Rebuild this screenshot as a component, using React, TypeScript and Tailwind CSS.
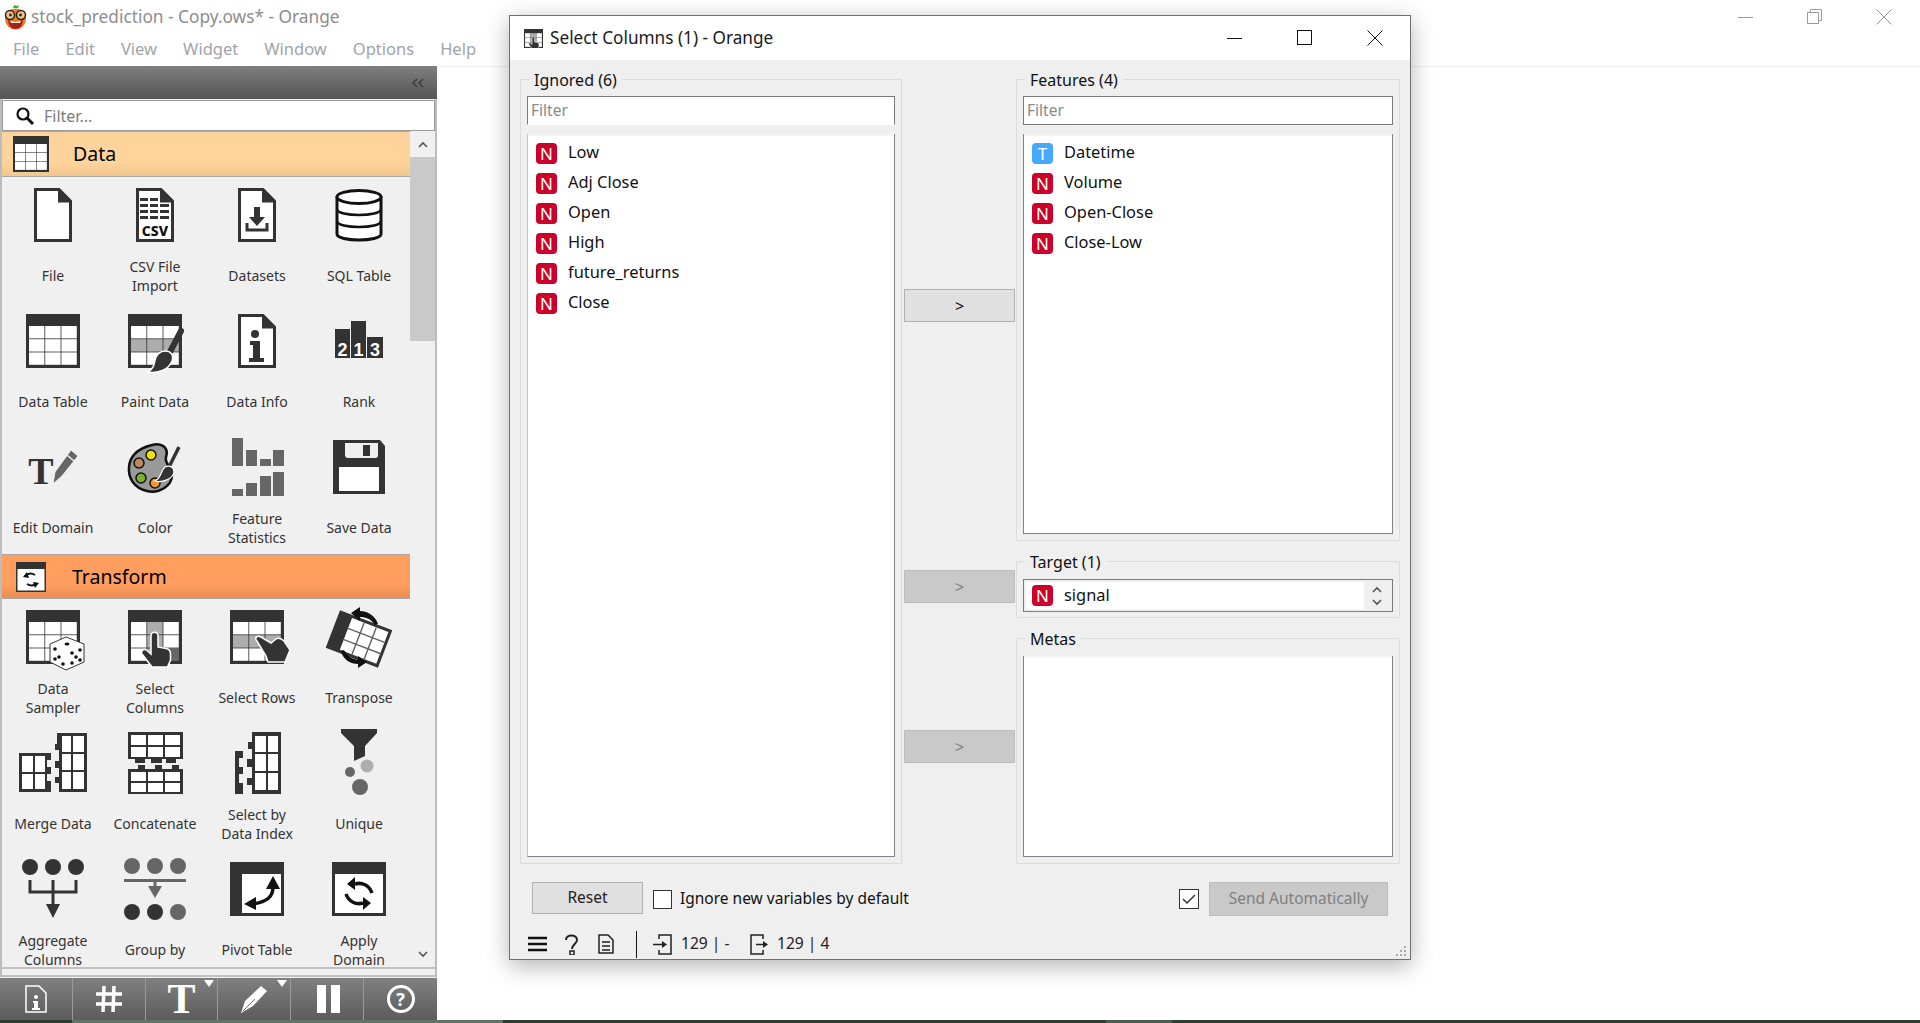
import type { ReactNode } from 'react'

const DARK = '#333333'
const GREY = '#666666'

// ---- widget icons, all drawn in a 54x54 box

function TableCells({ shaded = [] as string[], x = 3, y = 12 }) {
  const cells = []
  for (let r = 0; r < 3; r++) {
    for (let c = 0; c < 3; c++) {
      const on = shaded.includes(`${r}${c}`)
      cells.push(<rect key={`${r}${c}`} x={x + c * 16.2} y={y + r * 13.2} width={15.4} height={12.4} fill={on ? '#adadad' : '#ffffff'} />)
    }
  }
  return <>{cells}</>
}

function Icon({ children }: { children: ReactNode }) {
  return (
    <svg viewBox="0 0 54 54" width={54} height={54} className="overflow-visible">
      {children}
    </svg>
  )
}

function TableBase({ shaded, children }: { shaded?: string[]; children?: ReactNode }) {
  return (
    <Icon>
      <rect x={0} y={0} width={54} height={54} fill={DARK} />
      <TableCells shaded={shaded} />
      {children}
    </Icon>
  )
}

const docPath = 'M9.5 1.5H33L44.5 13V52.5H9.5Z'
const fileShape = (
  <>
    <path d={docPath} fill="#fff" stroke={DARK} strokeWidth={3} />
    <path d="M32 1V14.5H45.5Z" fill={DARK} />
  </>
)

const HandUp = (
  <path d="M23 26c0-5 7-5 7 0v11l8 1.500c3 .5 4.500 2.500 4.500 5.500v6l-3 7H24l-10-13c-2-3 2-6 5-3.500l4 3.500Z" fill={DARK} stroke="#fff" strokeWidth={1.5} />
)

const FileIcon = <Icon>{fileShape}</Icon>

const CsvIcon = (
  <Icon>
    {fileShape}
    {[10, 16, 22, 28].map((y) => (
      <g key={y} fill={DARK}>
        <rect x={12} y={y} width={8} height={3} />
        <rect x={22} y={y} width={8} height={3} />
        <rect x={32} y={y} width={9} height={3} />
      </g>
    ))}
    <text x={27} y={48} textAnchor="middle" className="font-['Noto_Sans',sans-serif]" fontWeight={800} fontSize={14} fill="#111">CSV</text>
  </Icon>
)

const DatasetsIcon = (
  <Icon>
    {fileShape}
    <path d="M24 19h6v10h5l-8 9-8-9h5Z" fill={DARK} />
    <path d="M17 35v7h20v-7" fill="none" stroke={DARK} strokeWidth={3} />
  </Icon>
)

const SqlIcon = (
  <Icon>
    <path d="M5 8v38c0 8 44 8 44 0V8" fill="#fff" stroke="#111" strokeWidth={3} />
    <ellipse cx={27} cy={9} rx={22} ry={6.500} fill="#fff" stroke="#111" strokeWidth={3} />
    <path d="M5 21c0 8 44 8 44 0M5 33c0 8 44 8 44 0" fill="none" stroke="#111" strokeWidth={2.500} />
  </Icon>
)

const DataTableIcon = <TableBase />

const PaintIcon = (
  <TableBase shaded={['10', '11', '12']}>
    <path d="M53 17L42 38" stroke={DARK} strokeWidth={6} strokeLinecap="round" />
    <path d="M37 37c6 0 9 4 7 10-3 8-13 13-24 11 6-4 6-7 7-12 1-5 5-9 10-9Z" fill={DARK} stroke="#fff" strokeWidth={1.500} />
  </TableBase>
)

const InfoIcon = (
  <Icon>
    {fileShape}
    <circle cx={25} cy={20} r={4} fill={DARK} />
    <path d="M20 27h10v17h4v4H19v-4h4V31h-3Z" fill={DARK} />
  </Icon>
)

const RankIcon = (
  <Icon>
    <rect x={3} y={15} width={15} height={29} fill={DARK} />
    <rect x={19} y={7} width={15} height={37} fill={DARK} />
    <rect x={35} y={23} width={16} height={21} fill={DARK} />
    <g className="font-['Liberation_Sans',sans-serif]" fontWeight={700} fontSize={18} fill="#fff" textAnchor="middle">
      <text x={10.500} y={42}>2</text>
      <text x={26.500} y={42}>1</text>
      <text x={43} y={42}>3</text>
    </g>
  </Icon>
)

const EditDomainIcon = (
  <Icon>
    <text x={15} y={44} textAnchor="middle" className="font-['Liberation_Serif',serif]" fontWeight={700} fontSize={38} fill={DARK}>T</text>
    <path d="M45 10l7 6-16 20-9 8 2-12Z" fill={GREY} stroke="#f0f0f0" strokeWidth={1} />
    <path d="M41 15l7 6" stroke="#f0f0f0" strokeWidth={1.500} />
  </Icon>
)

const ColorIcon = (
  <Icon>
    <path d="M24 5C34 2 41 8 38 17c-2 7 6 9 6 18 0 11-13 19-25 16C6 48 0 38 1 27 2 15 12 8 24 5Z" fill="#999" stroke="#111" strokeWidth={2.500} />
    <circle cx={23} cy={15} r={5} fill="#f2e200" stroke="#111" strokeWidth={1.500} />
    <circle cx={11} cy={23} r={5} fill="#b98a5f" stroke="#111" strokeWidth={1.500} />
    <circle cx={13} cy={38} r={5} fill="#7db32a" stroke="#111" strokeWidth={1.500} />
    <circle cx={27} cy={43} r={5} fill="#f59a2a" stroke="#111" strokeWidth={1.500} />
    <path d="M51 7L41 27" stroke={DARK} strokeWidth={3.500} />
    <path d="M37 27c5-2 9 0 9 5-1 7-12 11-19 9 6-2 6-11 10-14Z" fill={DARK} stroke="#fff" strokeWidth={1.200} />
  </Icon>
)

const StatsIcon = (
  <Icon>
    <g fill={GREY}>
      <rect x={2} y={-2} width={11} height={28} />
      <rect x={16} y={10} width={11} height={16} />
      <rect x={30} y={19} width={11} height={7} />
      <rect x={43} y={10} width={11} height={16} />
      <rect x={2} y={49} width={11} height={7} />
      <rect x={16} y={43} width={11} height={13} />
      <rect x={30} y={36} width={11} height={20} />
      <rect x={43} y={32} width={11} height={24} />
    </g>
  </Icon>
)

const SaveIcon = (
  <Icon>
    <path d="M1 0H48L53 6V54H1Z" fill={DARK} />
    <path d="M13 3H46V15a3 3 0 0 1-3 3H16a3 3 0 0 1-3-3Z" fill="#f0f0f0" />
    <rect x={31} y={5} width={7} height={11} fill={DARK} />
    <rect x={7} y={27} width={40} height={24} fill="#fff" />
  </Icon>
)

const SamplerIcon = (
  <TableBase>
    <path d="M40 27l18 7v18l-18 8-16-8V34Z" fill="#fff" stroke={DARK} strokeWidth={1} />
    <g fill="#111">
      <ellipse cx={41} cy={34} rx={2.500} ry={1.500} />
      <circle cx={29} cy={39} r={1.800} /><circle cx={33} cy={47} r={1.800} /><circle cx={29} cy={49} r={1.800} /><circle cx={37} cy={54} r={1.800} />
      <circle cx={46} cy={43} r={1.800} /><circle cx={54} cy={40} r={1.800} /><circle cx={50} cy={47} r={1.800} /><circle cx={46} cy={53} r={1.800} /><circle cx={54} cy={50} r={1.800} />
    </g>
  </TableBase>
)

const SelectColsIcon = (
  <TableBase shaded={['01', '11', '21']}>
    <rect x={35} y={38} width={16} height={13} fill={GREY} />
    {HandUp}
  </TableBase>
)

const SelectRowsIcon = (
  <TableBase shaded={['10', '11', '12']}>
    <path d="M27 31c-3-3 0-6 4-4l10 6 5-4c3-2 6 0 8 2l6 9-5 12H38l-2-6Z" fill={DARK} stroke="#fff" strokeWidth={1.500} />
  </TableBase>
)

const TransposeIcon = (
  <Icon>
    <g transform="rotate(21 27 29)">
      <rect x={-1} y={9} width={56} height={40} fill={DARK} />
      <rect x={13} y={12} width={39} height={34} fill="#fff" />
      <path d="M26 12v34M39 12v34M13 23h39M13 35h39" stroke={GREY} strokeWidth={1.500} />
    </g>
    <path d="M19 3l9-6v4c7 0 15 4 18 13l-3 1C39 9 34 7 28 7v4Z" fill="#111" />
    <path d="M35 52l-9 6v-4c-7 0-15-4-17-13l3-1c3 6 8 9 14 10v-4Z" fill="#111" />
  </Icon>
)

const MergeIcon = (
  <Icon>
    <path d="M-7 17H25V24H21V31H25V38H21V45H25V56H-7Z" fill={DARK} />
    <g fill="#fff">
      <rect x={-4} y={20} width={11} height={16} /><rect x={9} y={20} width={10} height={16} />
      <rect x={-4} y={38} width={11} height={15} /><rect x={9} y={38} width={10} height={15} />
    </g>
    <path d="M31 -3H61V56H33V47H29V41H33V32H29V25H33V14H29V8H31Z" fill={DARK} />
    <g fill="#fff">
      <rect x={36} y={0} width={9} height={16} /><rect x={47} y={0} width={11} height={16} />
      <rect x={36} y={18} width={9} height={16} /><rect x={47} y={18} width={11} height={16} />
      <rect x={36} y={36} width={9} height={17} /><rect x={47} y={36} width={11} height={17} />
    </g>
  </Icon>
)

const ConcatIcon = (
  <Icon>
    <path d="M0 -4H55V23H48V27H38V23H34V27H23V23H17V27H7V23H0Z" fill={DARK} />
    <g fill="#fff">
      <rect x={3} y={-1} width={15} height={10} /><rect x={20} y={-1} width={15} height={10} /><rect x={37} y={-1} width={15} height={10} />
      <rect x={3} y={11} width={15} height={10} /><rect x={20} y={11} width={15} height={10} /><rect x={37} y={11} width={15} height={10} />
    </g>
    <path d="M0 33H10V29H17V33H27V29H34V33H44V29H51V33H55V58H0Z" fill={DARK} />
    <g fill="#fff">
      <rect x={3} y={36} width={15} height={9} /><rect x={20} y={36} width={15} height={9} /><rect x={37} y={36} width={15} height={9} />
      <rect x={3} y={47} width={15} height={9} /><rect x={20} y={47} width={15} height={9} /><rect x={37} y={47} width={15} height={9} />
    </g>
  </Icon>
)

const SelectIndexIcon = (
  <Icon>
    <path d="M5 15H13V22H9V31H13V38H9V47H13V58H5Z" fill={DARK} />
    <path d="M22 -4H51V58H22V49H17V42H22V31H17V23H22V13H18V6H22Z" fill={DARK} />
    <g fill="#fff">
      <rect x={25} y={0} width={11} height={16} /><rect x={38} y={0} width={10} height={16} />
      <rect x={25} y={18} width={11} height={17} /><rect x={38} y={18} width={10} height={17} />
      <rect x={25} y={37} width={11} height={17} /><rect x={38} y={37} width={10} height={17} />
    </g>
  </Icon>
)

const UniqueIcon = (
  <Icon>
    <path d="M9 -7H45V-3L33 10V20L22 25V10L9 -3Z" fill={DARK} />
    <circle cx={35} cy={30} r={6.500} fill="#adadad" />
    <circle cx={18} cy={36} r={5} fill={GREY} />
    <circle cx={28} cy={51} r={8} fill={GREY} />
  </Icon>
)

const AggregateIcon = (
  <Icon>
    <g fill={DARK}>
      <circle cx={4} cy={5} r={8} /><circle cx={27} cy={5} r={8} /><circle cx={50} cy={5} r={8} />
    </g>
    <path d="M4 18v12h46V18M27 18v26" fill="none" stroke={DARK} strokeWidth={3} />
    <path d="M20 42h14l-7 14Z" fill={DARK} />
  </Icon>
)

const GroupByIcon = (
  <Icon>
    <g fill={GREY}>
      <circle cx={4} cy={4} r={8} /><circle cx={27} cy={4} r={8} /><circle cx={50} cy={4} r={8} />
    </g>
    <rect x={-4} y={17} width={62} height={3} fill={GREY} />
    <path d="M25.500 19h3v9h-3Z M20 24h14l-7 12Z" fill={GREY} />
    <circle cx={4} cy={50} r={8} fill={DARK} />
    <circle cx={27} cy={50} r={8} fill={DARK} />
    <circle cx={50} cy={50} r={8} fill={GREY} />
  </Icon>
)

const PivotIcon = (
  <Icon>
    <rect width={54} height={54} fill={DARK} />
    <rect x={12} y={12} width={39} height={39} fill="#fff" />
    <path d="M43 25c0 10-6 15-21 17" fill="none" stroke="#111" strokeWidth={3.500} />
    <path d="M43 14l7 13H36Z" fill="#111" />
    <path d="M14 42l12-7v13Z" fill="#111" />
  </Icon>
)

const ApplyDomainIcon = (
  <Icon>
    <rect width={54} height={54} fill={DARK} />
    <rect x={3} y={12} width={48} height={39} fill="#fff" />
    <path d="M23 22c7-2 14 1 17 9" fill="none" stroke="#111" strokeWidth={3.500} />
    <path d="M23 15l-8 7 8 6Z" fill="#111" />
    <path d="M31 41c-7 2-14-1-17-9" fill="none" stroke="#111" strokeWidth={3.500} />
    <path d="M31 35l8 6-8 7Z" fill="#111" />
  </Icon>
)

const dataWidgets: [string, ReactNode][] = [
  ['File', FileIcon],
  ['CSV File\nImport', CsvIcon],
  ['Datasets', DatasetsIcon],
  ['SQL Table', SqlIcon],
  ['Data Table', DataTableIcon],
  ['Paint Data', PaintIcon],
  ['Data Info', InfoIcon],
  ['Rank', RankIcon],
  ['Edit Domain', EditDomainIcon],
  ['Color', ColorIcon],
  ['Feature\nStatistics', StatsIcon],
  ['Save Data', SaveIcon],
]

const transformWidgets: [string, ReactNode][] = [
  ['Data\nSampler', SamplerIcon],
  ['Select\nColumns', SelectColsIcon],
  ['Select Rows', SelectRowsIcon],
  ['Transpose', TransposeIcon],
  ['Merge Data', MergeIcon],
  ['Concatenate', ConcatIcon],
  ['Select by\nData Index', SelectIndexIcon],
  ['Unique', UniqueIcon],
  ['Aggregate\nColumns', AggregateIcon],
  ['Group by', GroupByIcon],
  ['Pivot Table', PivotIcon],
  ['Apply\nDomain', ApplyDomainIcon],
]

function Widget({ name, icon }: { name: string; icon: ReactNode }) {
  return (
    <div className="h-[126px] flex flex-col items-center pt-[11px]">
      <div className="h-[54px] w-[54px]">{icon}</div>
      <div className="mt-[15px] h-[37px] w-[100px] flex items-center justify-center text-center whitespace-pre-line text-[14px] leading-[19px] text-[#333]">
        {name}
      </div>
    </div>
  )
}

function WidgetGrid({ items }: { items: [string, ReactNode][] }) {
  return (
    <div className="grid grid-cols-4 w-[408px]">
      {items.map(([name, icon]) => (
        <Widget key={name} name={name} icon={icon} />
      ))}
    </div>
  )
}

function Logo() {
  return (
    <svg viewBox="0 0 26 26" width={26} height={26}>
      <path d="M11 4l1-3 3 1 2-1-1 3Z" fill="#35b34a" />
      <circle cx={13.500} cy={15} r={10.500} fill="#ef7d22" />
      <path d="M6 16c5 2 10 2 15 0-.5 6-3.500 9-7.500 9S6.500 22 6 16Z" fill="#a8201a" />
      <path d="M8 17c4 1 7 1 11 0l-1 2H9Z" fill="#fff" />
      <circle cx={8} cy={11} r={4.500} fill="#f6c088" stroke="#222" strokeWidth={1.500} />
      <circle cx={19} cy={11} r={4.500} fill="#f6c088" stroke="#222" strokeWidth={1.500} />
      <circle cx={8.500} cy={11} r={1.400} fill="#222" />
      <circle cx={18.500} cy={11} r={1.400} fill="#222" />
    </svg>
  )
}

function WinControls({ color, restore }: { color: string; restore?: boolean }) {
  return (
    <>
      <svg width={16} height={16} className="block" viewBox="0 0 16 16">
        <path d="M0 8.500H15" stroke={color} />
      </svg>
      <svg width={16} height={16} className="block" viewBox="0 0 16 16">
        {restore ? (
          <path d="M3.500 3.500V.5H14.500V11.500H11.500M.5 3.500H11.500V14.500H.5Z" fill="none" stroke={color} />
        ) : (
          <rect x={.5} y={.5} width={14} height={14} fill="none" stroke={color} />
        )}
      </svg>
      <svg width={16} height={16} className="block" viewBox="0 0 16 16">
        <path d="M.5 .5L15.500 15.500M15.500 .5L.5 15.500" stroke={color} />
      </svg>
    </>
  )
}

function Chevron({ up }: { up?: boolean }) {
  return (
    <svg width={10} height={7} viewBox="0 0 10 7" className="block">
      <path d={up ? 'M1 6L5 2L9 6' : 'M1 1L5 5L9 1'} fill="none" stroke="#555" strokeWidth={1.600} />
    </svg>
  )
}

function Dock() {
  return (
    <div className="w-[437px] shrink-0 h-[954px] flex flex-col bg-[#f0f0f0] border-x-2 border-x-[#bcbcbc]">
      <div className="h-[33px] shrink-0 -mx-[2px] bg-linear-to-b from-[#808080] to-[#555555] flex items-center justify-end pr-[13px]">
        <svg width={12} height={10} viewBox="0 0 12 10">
          <path d="M5 1L1 5L5 9M11 1L7 5L11 9" fill="none" stroke="#3c3c3c" strokeWidth={1.500} />
        </svg>
      </div>
      <div className="h-[31px] shrink-0 border border-[#9a9a9a] bg-white flex items-center pl-[12px] mt-[1px]">
        <svg width={20} height={20} viewBox="0 0 20 20">
          <circle cx={8} cy={8} r={5.500} fill="none" stroke="#111" strokeWidth={2.200} />
          <path d="M12 12L18 18" stroke="#111" strokeWidth={3} />
        </svg>
        <span className="ml-[9px] text-[16px] text-[#7c7c7c]">Filter...</span>
      </div>
      <div className="h-[836px] shrink-0 flex overflow-hidden">
        <div className="w-[408px] shrink-0 overflow-hidden">
          <div className="h-[46px] bg-linear-to-b from-[#fed49c] via-[#fed49c] via-70% to-[#f2c68f] border-y border-[#a8a8a8] flex items-center">
            <svg width={36} height={36} viewBox="0 0 54 54" className="ml-[11px]">
              <rect width={54} height={54} fill={DARK} />
              <TableCells />
            </svg>
            <span className="ml-[24px] text-[19.500px] text-black">Data</span>
          </div>
          <WidgetGrid items={dataWidgets} />
          <div className="h-[45px] -mt-[1px] bg-linear-to-b from-[#ff9e5e] via-[#ff9e5e] via-70% to-[#ea8c53] border-y border-[#a8a8a8] flex items-center">
            <svg width={30} height={30} viewBox="0 0 30 30" className="ml-[14px]">
              <rect width={30} height={30} fill={DARK} />
              <rect x={1.500} y={7} width={27} height={21.500} fill="#fff" />
              <path d="M9 14c3-3 7-3 10-1M21 21c-3 3-7 3-10 1" fill="none" stroke="#111" strokeWidth={2} />
              <path d="M11 10l-4 5 6 1ZM19 26l4-5-6-1Z" fill="#111" />
            </svg>
            <span className="ml-[26px] text-[19.500px] text-black">Transform</span>
          </div>
          <WidgetGrid items={transformWidgets} />
        </div>
        <div className="w-[25px] shrink-0 flex flex-col items-center">
          <div className="h-[26px] shrink-0 flex items-center justify-center">
            <Chevron up />
          </div>
          <div className="h-[184px] w-full shrink-0 bg-[#c9c9c9]" />
          <div className="flex-1" />
          <div className="h-[26px] shrink-0 flex items-center justify-center">
            <Chevron />
          </div>
        </div>
      </div>
      <div className="h-[10px] shrink-0 border-y-2 border-[#c2c2c2] bg-[#f0f0f0]" />
      <div className="h-[43px] shrink-0 -mx-[2px] bg-linear-to-b from-[#808080] to-[#5c5c5c] border-t border-[#f0f0f0] flex">
        <ToolButton>
          <svg width={22} height={28} viewBox="0 0 22 28" className="ml-[1px]">
            <path d="M1 1H14L21 8V27H1Z" fill="none" stroke="#fff" strokeWidth={1.500} />
            <circle cx={11} cy={12} r={2} fill="#fff" />
            <path d="M8 16h5v7h2v2H7v-2h2v-5H8Z" fill="#fff" />
          </svg>
        </ToolButton>
        <ToolButton>
          <svg width={28} height={28} viewBox="0 0 28 28">
            <path d="M9 1L8 27M19 1L18 27M1 9H27M1 19H27" stroke="#fff" strokeWidth={3.500} />
          </svg>
        </ToolButton>
        <ToolButton>
          <span className="font-['Liberation_Serif',serif] font-bold text-[42px] leading-[30px] text-white">T</span>
          <Caret />
        </ToolButton>
        <ToolButton>
          <svg width={28} height={30} viewBox="0 0 28 30">
            <path d="M27 7L13 22L1 29L5 17L21 2Z" fill="#fff" />
            <path d="M3 27L15 15" stroke="#6c6c6c" strokeWidth={1} />
          </svg>
          <Caret />
        </ToolButton>
        <ToolButton>
          <div className="flex gap-[5px] ml-[2px]">
            <div className="w-[9px] h-[28px] bg-white" />
            <div className="w-[9px] h-[28px] bg-white" />
          </div>
        </ToolButton>
        <ToolButton last>
          <div className="w-[28px] h-[28px] rounded-full border-[3px] border-white flex items-center justify-center text-white font-bold text-[18px] leading-none">?</div>
        </ToolButton>
      </div>
    </div>
  )
}

function Caret() {
  return <div className="absolute top-[2px] right-[3px] w-0 h-0 border-x-[5px] border-x-transparent border-t-[7px] border-t-white" />
}

function ToolButton({ children, last }: { children: ReactNode; last?: boolean }) {
  return (
    <div className={`relative w-[73px] flex items-center justify-center ${last ? '' : 'border-r border-[#9a9a9a]'}`}>
      {children}
    </div>
  )
}

function Badge({ kind }: { kind: 'N' | 'T' }) {
  return (
    <span className={`w-[21px] h-[21px] rounded-[4px] text-white text-[17px] leading-[21px] text-center ${kind === 'N' ? 'bg-[#cc0028]' : 'bg-[#45a9ff]'}`}>
      {kind}
    </span>
  )
}

function VarRow({ name, kind = 'N' }: { name: string; kind?: 'N' | 'T' }) {
  return (
    <div className="h-[30px] flex items-center gap-[11px] pl-[6px] text-[16.400px] text-[#111]">
      <Badge kind={kind} />
      <span className="-mt-[1px]">{name}</span>
    </div>
  )
}

function FilterBox({ className = '' }: { className?: string }) {
  return (
    <div className={`h-[29px] shrink-0 mt-[7px] bg-white border border-[#7a7a7a] flex items-center pl-[3px] text-[15.500px] text-[#8a8a8a] ${className}`}>Filter</div>
  )
}

function ListBox({ children, className = '' }: { children?: ReactNode; className?: string }) {
  return (
    <div className={`flex-1 bg-white border-x border-b border-[#82828a] shadow-[inset_0_2px_0_#f4f4f4] pt-[4px] pl-[2px] ${className}`}>
      {children}
    </div>
  )
}

function Group({ title, className = '', children }: { title: string; className?: string; children: ReactNode }) {
  return (
    <div className={`border border-[#dcdcdc] flex flex-col px-[6px] pb-[6px] ${className}`}>
      <div className="-mt-[11px] ml-[2px] w-fit h-[20px] px-[5px] bg-[#efefef] text-[16px] leading-[22px] text-[#111]">{title}</div>
      {children}
    </div>
  )
}

function MoveButton({ disabled, className = '' }: { disabled?: boolean; className?: string }) {
  return (
    <div className={`h-[33px] border flex items-center justify-center text-[16px] ${disabled ? 'bg-[#c9c9c9] border-[#bdbdbd] text-[#808080]' : 'bg-[#e0e0e0] border-[#b0b0b0] text-[#111]'} ${className}`}>
      &gt;
    </div>
  )
}

function SelectColumnsDialog() {
  return (
    <div className="absolute left-[509px] top-[15px] w-[902px] h-[945px] border border-[#6f6f6f] bg-[#efefef] shadow-[0_6px_22px_rgba(0,0,0,0.3)] flex flex-col">
      <div className="h-[44px] shrink-0 bg-white flex items-center pl-[14px]">
        <svg width={19} height={19} viewBox="0 0 54 54">
          <rect width={54} height={54} fill={DARK} />
          <TableCells shaded={['01', '11', '21']} />
          {HandUp}
        </svg>
        <span className="ml-[7px] text-[17.200px] text-[#1a1a1a]">Select Columns (1) - Orange</span>
        <div className="ml-auto mr-[27px] flex gap-[54px]">
          <WinControls color="#111" />
        </div>
      </div>

      <div className="pt-[19px] px-[10px] flex h-[804px] shrink-0">
        <Group title="Ignored (6)" className="w-[382px] shrink-0 h-[785px]">
          <FilterBox className="border-b-transparent" />
          <ListBox className="mt-[9px] border-l-[#c4c4c4]">
            {['Low', 'Adj Close', 'Open', 'High', 'future_returns', 'Close'].map((name) => (
              <VarRow key={name} name={name} />
            ))}
          </ListBox>
        </Group>

        <div className="w-[111px] shrink-0 ml-[2px] mr-[1px] pt-[210px]">
          <MoveButton />
          <MoveButton disabled className="mt-[248px]" />
          <MoveButton disabled className="mt-[127px]" />
        </div>

        <div className="w-[384px] shrink-0 flex flex-col gap-[20px]">
          <Group title="Features (4)" className="h-[462px]">
            <FilterBox />
            <ListBox className="mt-[9px]">
              <VarRow name="Datetime" kind="T" />
              <VarRow name="Volume" />
              <VarRow name="Open-Close" />
              <VarRow name="Close-Low" />
            </ListBox>
          </Group>
          <Group title="Target (1)" className="h-[57px]">
            <div className="mt-[8px] h-[33px] shrink-0 border border-[#7a7a80] flex p-[2px]">
              <div className="flex-1 bg-white flex items-center gap-[11px] pl-[6px] text-[16.400px] text-[#111]">
                <Badge kind="N" />
                <span className="-mt-[1px]">signal</span>
              </div>
              <div className="w-[26px] flex flex-col items-center justify-center gap-[6px]">
                <Chevron up />
                <Chevron />
              </div>
            </div>
          </Group>
          <Group title="Metas" className="h-[226px]">
            <ListBox className="mt-[8px]" />
          </Group>
        </div>
      </div>

      <div className="h-[34px] mt-[18px] shrink-0 flex items-center pl-[22px] pr-[22px]">
        <div className="w-[111px] h-[32px] border border-[#b0b0b0] bg-[#e0e0e0] flex items-center justify-center text-[15.500px] text-[#222] -mt-[2px]">Reset</div>
        <div className="ml-[10px] w-[19px] h-[19px] border border-[#333] bg-white" />
        <span className="ml-[8px] text-[15.500px] text-[#111]">Ignore new variables by default</span>
        <div className="ml-auto w-[20px] h-[20px] border border-[#333] bg-white flex items-center justify-center">
          <svg width={14} height={12} viewBox="0 0 14 12">
            <path d="M1 6L5 10L13 2" fill="none" stroke="#333" strokeWidth={1.500} />
          </svg>
        </div>
        <div className="ml-[10px] w-[179px] h-[34px] border border-[#bdbdbd] bg-[#c9c9c9] flex items-center justify-center text-[15.500px] text-[#808080]">Send Automatically</div>
      </div>

      <div className="h-[28px] mt-[14px] shrink-0 flex items-center pl-[18px] text-[#222] text-[15.600px]">
        <svg width={19} height={16} viewBox="0 0 19 16">
          <path d="M0 2H19M0 8H19M0 14H19" stroke="#111" strokeWidth={2.400} />
        </svg>
        <svg width={15} height={21} viewBox="0 0 15 21" className="ml-[17px]">
          <path d="M2 6c0-6 11-6 11 0 0 4-5 4-5 9" fill="none" stroke="#222" strokeWidth={2} />
          <rect x={6} y={17} width={4} height={4} fill="none" stroke="#222" strokeWidth={1.500} />
        </svg>
        <svg width={16} height={20} viewBox="0 0 16 20" className="ml-[19px]">
          <path d="M1 1H10L15 6V19H1ZM4 8H12M4 12H12M4 16H12" fill="none" stroke="#222" strokeWidth={1.500} />
        </svg>
        <div className="ml-[22px] w-px h-[27px] bg-[#111]" />
        <svg width={20} height={21} viewBox="0 0 20 21" className="ml-[16px]">
          <path d="M6 5V1H18V20H6V16M0 10.500H11" fill="none" stroke="#222" strokeWidth={1.500} />
          <path d="M9 7L14 10.500L9 14Z" fill="#222" />
        </svg>
        <span className="ml-[8px] w-[69px]">129 | -</span>
        <svg width={19} height={21} viewBox="0 0 19 21">
          <path d="M13 5V1H1V20H13V16M6 10.500H14" fill="none" stroke="#222" strokeWidth={1.500} />
          <path d="M13 7L18 10.500L13 14Z" fill="#222" />
        </svg>
        <span className="ml-[8px]">129 | 4</span>
        <svg width={12} height={12} viewBox="0 0 12 12" className="ml-auto mr-[3px] self-end mb-[1px]">
          <path d="M9 1h2v2H9ZM5 5h2v2H5ZM9 5h2v2H9ZM1 9h2v2H1ZM5 9h2v2H5ZM9 9h2v2H9Z" fill="#aaa" />
        </svg>
      </div>
    </div>
  )
}

export default function App() {
  return (
    <div className="relative w-[1920px] h-[1023px] overflow-hidden bg-white flex flex-col font-['Noto_Sans',sans-serif]">
      <div className="h-[33px] shrink-0 flex items-center pl-[2px]">
        <Logo />
        <span className="ml-[3px] text-[17.300px] text-[#8d8d8d]">stock_prediction - Copy.ows* - Orange</span>
        <div className="ml-auto mr-[28px] flex gap-[53px]">
          <WinControls color="#999" restore />
        </div>
      </div>
      <div className="h-[33px] shrink-0 flex items-center gap-[26px] pl-[13px] text-[16.500px] text-[#a0a4a8]">
        {['File', 'Edit', 'View', 'Widget', 'Window', 'Options', 'Help'].map((item) => (
          <span key={item}>{item}</span>
        ))}
      </div>
      <div className="h-[954px] shrink-0 flex">
        <Dock />
        <div className="flex-1 border-t border-[#f0f0f0]" />
      </div>
      <div className="h-[3px] shrink-0 bg-[#2c3e30] flex">
        <div className="ml-[72px] w-[431px] bg-[#5f7563]" />
        <div className="ml-[603px] w-[66px] bg-[#4a5e4e]" />
      </div>
      <SelectColumnsDialog />
    </div>
  )
}
